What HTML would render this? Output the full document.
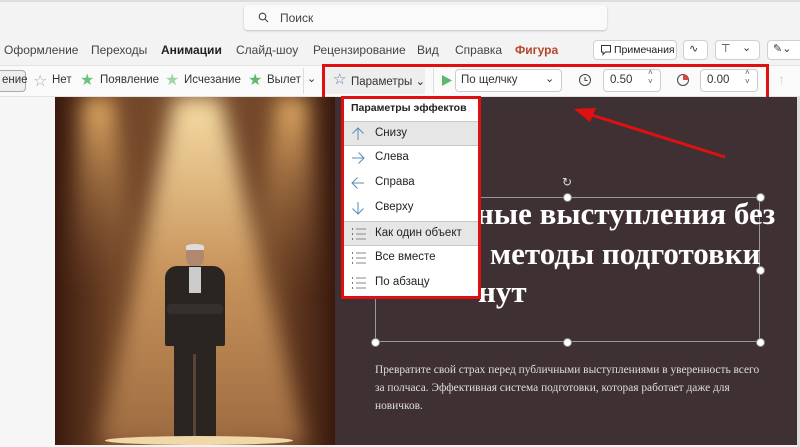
<!DOCTYPE html>
<html><head><meta charset="utf-8"><style>
*{margin:0;padding:0;box-sizing:border-box}
body{width:800px;height:447px;overflow:hidden;background:#f3f3f3;font-family:"Liberation Sans","DejaVu Sans",sans-serif;position:relative;font-size:12px;color:#333}
.a{position:absolute;white-space:nowrap}
.btn{position:absolute;border:1px solid #d0d0d0;border-radius:4px;background:#fff;height:20px}
.h{position:absolute;width:9px;height:9px;border-radius:50%;background:#fff;border:1px solid #888}
.mi{position:absolute;left:344px;width:134px;height:25px;font-size:11.5px;color:#222}
.mi span{position:absolute;left:31px;top:5px}
.mi svg{position:absolute;left:7px;top:5px}
.sel{background:#e6e6e6;border-top:1px solid #c8c8c8;border-bottom:1px solid #c8c8c8}
</style></head><body>
<div class="a" style="left:0;top:0;width:800px;height:2px;background:#ddd"></div>
<div class="a" style="left:244px;top:5px;width:363px;height:25px;background:#fafafa;border-radius:4px;box-shadow:0 1px 2px rgba(0,0,0,.2)"></div>
<svg class="a" style="left:258px;top:12px" width="11" height="11" viewBox="0 0 11 11"><circle cx="4.5" cy="4.5" r="3.3" fill="none" stroke="#444" stroke-width="1.1"/><path d="M7 7l3 3" stroke="#444" stroke-width="1.1"/></svg>
<div class="a" style="left:280px;top:11px;font-size:12px;color:#444">Поиск</div>
<div class="a" style="top:43px;left:4px;font-size:12px;color:#444">Оформление</div>
<div class="a" style="top:43px;left:91px;font-size:12px;color:#444">Переходы</div>
<div class="a" style="top:43px;left:161px;font-size:12px;color:#222;font-weight:bold">Анимации</div>
<div class="a" style="top:43px;left:236px;font-size:12px;color:#444">Слайд-шоу</div>
<div class="a" style="top:43px;left:313px;font-size:12px;color:#444">Рецензирование</div>
<div class="a" style="top:43px;left:417px;font-size:12px;color:#444">Вид</div>
<div class="a" style="top:43px;left:455px;font-size:12px;color:#444">Справка</div>
<div class="a" style="top:43px;left:515px;font-size:12px;color:#b5462b;font-weight:bold">Фигура</div>
<div class="btn" style="left:593px;top:40px;width:84px"></div>
<svg class="a" style="left:600px;top:44px" width="12" height="12" viewBox="0 0 12 12"><path d="M1.5 1.5h9v6.5h-5l-2.5 2.5v-2.5h-1.5z" fill="none" stroke="#333"/></svg>
<div class="a" style="left:614px;top:44px;font-size:10.5px;color:#222">Примечания</div>
<div class="btn" style="left:683px;top:40px;width:25px"></div>
<div class="a" style="left:689px;top:42px;font-size:11px">∿</div>
<div class="btn" style="left:715px;top:40px;width:45px"></div>
<div class="a" style="left:721px;top:42px;font-size:11px">⊤</div><div class="a" style="left:742px;top:41px;font-size:11px">⌄</div>
<div class="btn" style="left:767px;top:40px;width:40px"></div>
<div class="a" style="left:773px;top:42px;font-size:11px">✎⌄</div>
<div class="a" style="left:0;top:65px;width:800px;height:32px;background:#fafafa;border-top:1px solid #e3e3e3;border-bottom:1px solid #e3e3e3"></div>
<div class="a" style="left:-4px;top:70px;width:30px;height:22px;border:1px solid #aaa;border-radius:4px;background:#eee"></div>
<div class="a" style="left:2px;top:74px;font-size:11.5px">ение</div>
<div class="a" style="left:33px;top:71px;font-size:16px;color:#aaa">☆</div><div class="a" style="left:52px;top:74px;font-size:11.5px">Нет</div>
<div class="a" style="left:80px;top:70px;font-size:16px;color:#6cc27c">★</div><div class="a" style="left:100px;top:74px;font-size:11.5px">Появление</div>
<div class="a" style="left:165px;top:70px;font-size:16px;color:#9fd4a8">★</div><div class="a" style="left:184px;top:74px;font-size:11.5px">Исчезание</div>
<div class="a" style="left:248px;top:70px;font-size:16px;color:#5cb86c">★</div><div class="a" style="left:267px;top:74px;font-size:11.5px">Вылет</div>
<div class="a" style="left:303px;top:68px;width:1px;height:26px;background:#ddd"></div>
<div class="a" style="left:307px;top:72px;font-size:11px">⌄</div>
<div class="a" style="left:325px;top:68px;width:100px;height:26px;background:#eee"></div>
<div class="a" style="left:333px;top:70px;font-size:15px;color:#5a7fa8">☆</div>
<div class="a" style="left:351px;top:74px;font-size:11.5px">Параметры ⌄</div>
<div class="a" style="left:433px;top:68px;width:1px;height:26px;background:#ddd"></div>
<svg class="a" style="left:441px;top:74px" width="12" height="13"><path d="M1 1l10 5.5-10 5.5z" fill="#5cb86c"/></svg>
<div class="a" style="left:455px;top:69px;width:107px;height:23px;border:1px solid #ccc;border-radius:4px;background:#fff"></div>
<div class="a" style="left:461px;top:74px;font-size:11.5px">По щелчку</div>
<div class="a" style="left:545px;top:72px;font-size:11px">⌄</div>
<svg class="a" style="left:578px;top:73px" width="14" height="14"><circle cx="7" cy="7" r="5.5" fill="none" stroke="#444"/><path d="M7 4v3.5h2.5" fill="none" stroke="#444"/></svg>
<div class="a" style="left:603px;top:69px;width:58px;height:23px;border:1px solid #ccc;border-radius:4px;background:#fff"></div>
<div class="a" style="left:610px;top:74px;font-size:11.5px">0.50</div>
<div class="a" style="left:648px;top:68px;font-size:8px;line-height:9px;color:#555">˄<br>˅</div>
<svg class="a" style="left:676px;top:73px" width="14" height="14"><circle cx="7" cy="7" r="5.5" fill="none" stroke="#444"/><path d="M7 7V1.5A5.5 5.5 0 0 1 12.5 7z" fill="#d44"/></svg>
<div class="a" style="left:700px;top:69px;width:58px;height:23px;border:1px solid #ccc;border-radius:4px;background:#fff"></div>
<div class="a" style="left:707px;top:74px;font-size:11.5px">0.00</div>
<div class="a" style="left:745px;top:68px;font-size:8px;line-height:9px;color:#555">˄<br>˅</div>
<div class="a" style="left:778px;top:71px;font-size:14px;color:#c8d8e8">↑</div>
<div class="a" style="left:322px;top:64px;width:447px;height:36px;border:3px solid #e01010"></div>
<!-- slide -->
<div class="a" style="left:0;top:97px;width:55px;height:350px;background:#f6f6f6"></div>
<div class="a" style="left:55px;top:97px;width:743px;height:348px;background:#3f3133"></div>
<svg class="a" style="left:55px;top:97px" width="280" height="348" viewBox="0 0 280 348">
<defs>
<linearGradient id="bg" x1="0" x2="1"><stop offset="0" stop-color="#3a1a0e"/><stop offset=".2" stop-color="#6e4326"/><stop offset=".5" stop-color="#7d5030"/><stop offset=".8" stop-color="#6e4326"/><stop offset="1" stop-color="#3a1a0e"/></linearGradient>
<linearGradient id="cone" x1="0" y1="0" x2="0" y2="1"><stop offset="0" stop-color="#f6dca4"/><stop offset=".5" stop-color="#c8945c"/><stop offset="1" stop-color="#9c6a40"/></linearGradient>
<linearGradient id="side" x1="0" y1="0" x2="0" y2="1"><stop offset="0" stop-color="#e8b068"/><stop offset="1" stop-color="#7d5030" stop-opacity="0"/></linearGradient>
<filter id="bl"><feGaussianBlur stdDeviation="10"/></filter>
</defs>
<rect width="280" height="348" fill="url(#bg)"/>
<g filter="url(#bl)">
<path d="M120 0H165L250 348H45Z" fill="url(#cone)"/>
<path d="M28 0H58L85 200H15Z" fill="url(#side)"/>
<path d="M222 0H252L265 200H195Z" fill="url(#side)"/>
</g>
</svg>
<div class="a" style="left:163px;top:244px;width:64px;height:200px">
<div class="a" style="left:23px;top:0;width:18px;height:23px;border-radius:45%;background:#b08870"></div>
<div class="a" style="left:23px;top:0;width:18px;height:6px;border-radius:45% 45% 0 0;background:#ddd"></div>
<div class="a" style="left:2px;top:22px;width:60px;height:80px;background:#2b2522;border-radius:12px 12px 2px 2px"></div>
<div class="a" style="left:26px;top:23px;width:12px;height:26px;background:#ccc"></div>
<div class="a" style="left:4px;top:60px;width:56px;height:10px;background:#35302c;border-radius:4px"></div>
<div class="a" style="left:11px;top:100px;width:42px;height:94px;background:#2b2522"></div>
<div class="a" style="left:30px;top:110px;width:3px;height:84px;background:#5a4438"></div>
</div>
<div class="a" style="left:105px;top:436px;width:188px;height:9px;border-radius:50%;background:#f0d8a8"></div>
<div class="a" style="left:797px;top:97px;width:3px;height:350px;background:#ddd"></div>
<div class="a" style="left:375px;top:197px;width:385px;height:145px;border:1px solid #999"></div>
<div class="a" style="left:476px;top:196px;font:bold 31px 'Liberation Serif',serif;color:#fff">ные выступления без</div>
<div class="a" style="left:490px;top:236px;font:bold 31px 'Liberation Serif',serif;color:#fff">методы подготовки</div>
<div class="a" style="left:478px;top:274px;font:bold 31px 'Liberation Serif',serif;color:#fff">нут</div>
<div class="h" style="left:563px;top:193px"></div><div class="h" style="left:756px;top:193px"></div>
<div class="h" style="left:756px;top:266px"></div><div class="h" style="left:371px;top:338px"></div>
<div class="h" style="left:563px;top:338px"></div><div class="h" style="left:756px;top:338px"></div>
<div class="a" style="left:562px;top:175px;font-size:12px;color:#ddd">↻</div>
<div class="a" style="left:375px;top:361px;font:11.4px/18px 'Liberation Serif',serif;color:#ddd;white-space:normal;width:388px">Превратите свой страх перед публичными выступлениями в уверенность всего за полчаса. Эффективная система подготовки, которая работает даже для новичков.</div>
<!-- menu -->
<div class="a" style="left:341px;top:96px;width:140px;height:203px;background:#fff;border:3px solid #e01010"></div>
<div class="a" style="left:351px;top:102px;font-size:10.5px;font-weight:bold;color:#222">Параметры эффектов</div>
<div class="mi sel" style="top:121px"><svg width="14" height="14"><path d="M7 13V1M1.5 6.5L7 1l5.5 5.5" fill="none" stroke="#5a8cb0"/></svg><span>Снизу</span></div>
<div class="mi" style="top:146px"><svg width="14" height="14"><path d="M1 7h12M7.5 1.5L13 7l-5.5 5.5" fill="none" stroke="#5a8cb0"/></svg><span>Слева</span></div>
<div class="mi" style="top:171px"><svg width="14" height="14"><path d="M13 7H1M6.5 1.5L1 7l5.5 5.5" fill="none" stroke="#5a8cb0"/></svg><span>Справа</span></div>
<div class="mi" style="top:196px"><svg width="14" height="14"><path d="M7 1v12M1.5 7.5L7 13l5.5-5.5" fill="none" stroke="#5a8cb0"/></svg><span>Сверху</span></div>
<div class="mi sel" style="top:221px"><svg width="16" height="14"><path d="M1 2h1M1 7h1M1 12h1" stroke="#356" stroke-width="1.6"/><path d="M5 2h10M5 7h10M5 12h10" stroke="#888"/></svg><span>Как один объект</span></div>
<div class="mi" style="top:246px"><svg width="16" height="14"><path d="M1 2h1M1 7h1M1 12h1" stroke="#356" stroke-width="1.6"/><path d="M5 2h10M5 7h10M5 12h10" stroke="#888"/></svg><span>Все вместе</span></div>
<div class="mi" style="top:271px"><svg width="16" height="14"><path d="M1 2h1M1 7h1M1 12h1" stroke="#356" stroke-width="1.6"/><path d="M5 2h10M5 7h10M5 12h10" stroke="#888"/></svg><span>По абзацу</span></div>
<svg class="a" style="left:560px;top:100px" width="175" height="65"><path d="M165 57L22 12" stroke="#e01010" stroke-width="3"/><path d="M14 9l22-1-6 14z" fill="#e01010"/></svg>
</body></html>
